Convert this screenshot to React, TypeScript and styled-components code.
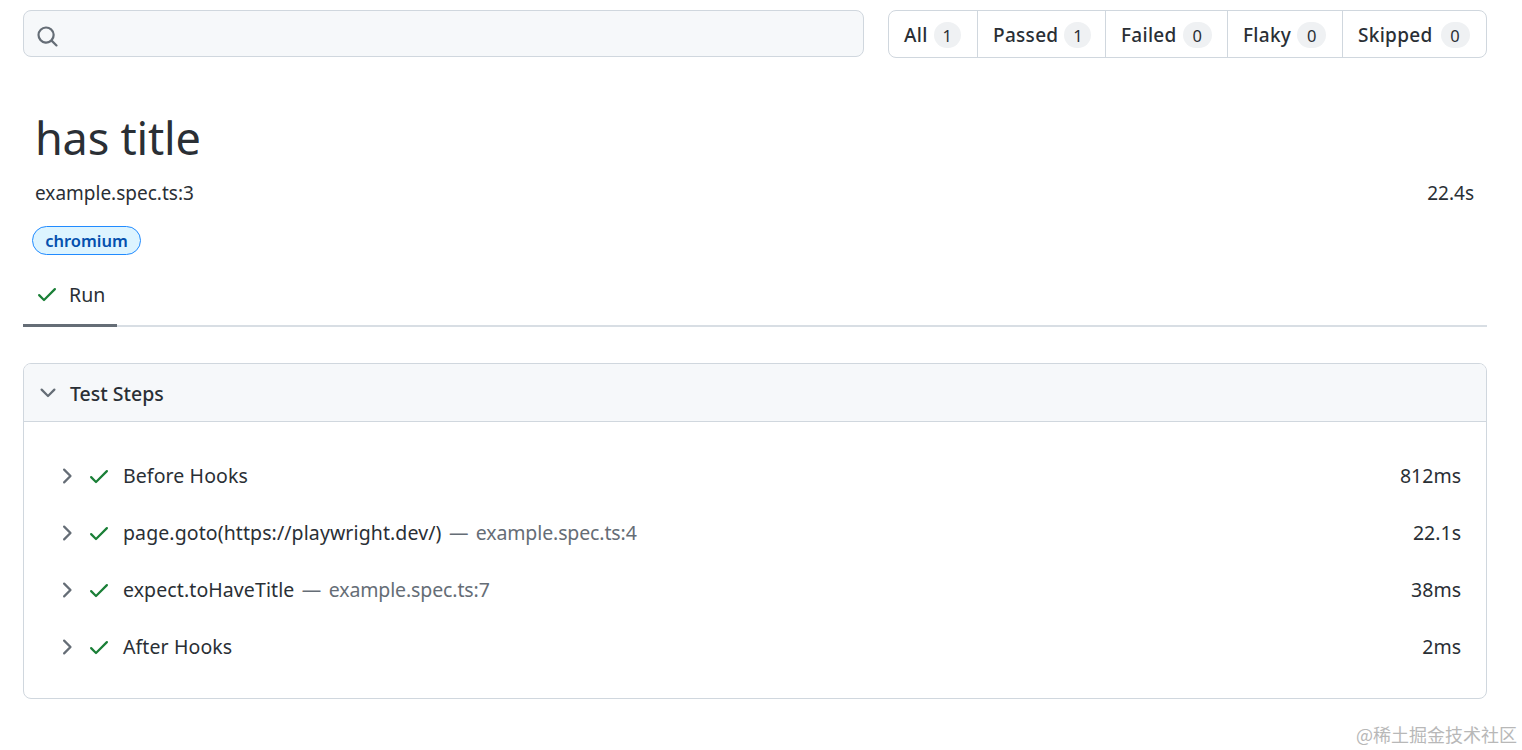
import styled, {createGlobalStyle} from 'styled-components'

const FONT = '"Noto Sans", "Open Sans", sans-serif'

const searchPath = 'M10.68 11.74a6 6 0 0 1-7.922-8.982 6 6 0 0 1 8.982 7.922l3.04 3.04a.749.749 0 0 1-.326 1.275.749.749 0 0 1-.734-.215ZM11.5 7a4.499 4.499 0 1 0-8.997 0A4.499 4.499 0 0 0 11.5 7Z'
const checkPath = 'M13.78 4.22a.75.75 0 0 1 0 1.06l-7.25 7.25a.75.75 0 0 1-1.06 0L2.22 9.28a.751.751 0 0 1 .018-1.042.751.751 0 0 1 1.042-.018L6 10.94l6.72-6.72a.75.75 0 0 1 1.06 0Z'
const chevronDownPath = 'M12.78 5.22a.749.749 0 0 1 0 1.06l-4.25 4.25a.749.749 0 0 1-1.06 0L3.22 6.28a.749.749 0 1 1 1.06-1.06L8 8.939l3.72-3.719a.749.749 0 0 1 1.06 0Z'
const chevronRightPath = 'M6.22 3.22a.75.75 0 0 1 1.06 0l4.25 4.25a.75.75 0 0 1 0 1.06l-4.25 4.25a.751.751 0 0 1-1.042-.018.751.751 0 0 1-.018-1.042L9.94 8 6.22 4.28a.75.75 0 0 1 0-1.06Z'

const Icon = ({d, color}: {d: string; color: string}) => (
    <IconSvg viewBox="0 0 16 16" fill={color}>
        <path d={d}/>
    </IconSvg>
)

const filters = [
    {label: 'All', count: 1, width: 88},
    {label: 'Passed', count: 1, width: 128},
    {label: 'Failed', count: 0, width: 122},
    {label: 'Flaky', count: 0, width: 115},
    {label: 'Skipped', count: 0, width: 144},
]

const steps = [
    {title: 'Before Hooks', source: '', time: '812ms'},
    {title: 'page.goto(https://playwright.dev/)', source: 'example.spec.ts:4', time: '22.1s'},
    {title: 'expect.toHaveTitle', source: 'example.spec.ts:7', time: '38ms'},
    {title: 'After Hooks', source: '', time: '2ms'},
]

const App = () => {
    return (
        <Page>
            <GlobalStyle/>
            <TopBar>
                <SearchBox>
                    <Icon d={searchPath} color="#656d76"/>
                </SearchBox>
                <FilterNav>
                    {filters.map((f) => (
                        <FilterItem key={f.label} $width={f.width}>
                            {f.label}
                            <Counter $wide={f.count === 0}>{f.count}</Counter>
                        </FilterItem>
                    ))}
                </FilterNav>
            </TopBar>

            <Title>has title</Title>
            <MetaRow>
                <span>example.spec.ts:3</span>
                <span>22.4s</span>
            </MetaRow>
            <Label>chromium</Label>

            <Tabs>
                <Tab>
                    <Icon d={checkPath} color="#1a7f37"/>
                    Run
                </Tab>
            </Tabs>

            <Chip>
                <ChipHeader>
                    <Icon d={chevronDownPath} color="#656d76"/>
                    Test Steps
                </ChipHeader>
                <ChipBody>
                    {steps.map((s) => (
                        <StepRow key={s.title}>
                            <Icon d={chevronRightPath} color="#656d76"/>
                            <Icon d={checkPath} color="#1a7f37"/>
                            <StepTitle>
                                {s.title}
                                {s.source && <StepSource> — {s.source}</StepSource>}
                            </StepTitle>
                            <StepTime>{s.time}</StepTime>
                        </StepRow>
                    ))}
                </ChipBody>
            </Chip>

            <Watermark>@稀土掘金技术社区</Watermark>
        </Page>
    )
}
export default App

// ==========================================

const GlobalStyle = createGlobalStyle`
  html, body {
    margin: 0;
    background: #fff;
    overflow: hidden;
  }
`

const Page = styled.div`
  position: relative;
  box-sizing: border-box;
  width: 1522px;
  height: 750px;
  padding: 10px 35px 0 23px;
  font-family: ${FONT};
  font-size: 19px;
  color: #2a2f35;
`

const IconSvg = styled.svg`
  width: 24px;
  height: 24px;
  flex: none;
`

const TopBar = styled.div`
  display: flex;
  justify-content: space-between;
  align-items: flex-start;
`

const SearchBox = styled.div`
  box-sizing: border-box;
  width: 841px;
  height: 47px;
  display: flex;
  align-items: center;
  padding: 5px 0 0 12px;
  background: #f6f8fa;
  border: 1px solid #d0d7de;
  border-radius: 8px;

  svg {
    width: 23px;
    height: 23px;
  }
`

const FilterNav = styled.div`
  display: flex;
  height: 48px;
  box-sizing: border-box;
  border: 1px solid #d0d7de;
  border-radius: 8px;
`

const FilterItem = styled.div<{$width: number}>`
  box-sizing: border-box;
  width: ${(p) => p.$width}px;
  display: flex;
  align-items: center;
  padding: 2px 0 0 15px;
  font-size: 19px;
  font-weight: 500;
  letter-spacing: 0.3px;

  & + & {
    border-left: 1px solid #d0d7de;
  }

  &:last-child > span {
    margin-left: 8px;
  }
`

const Counter = styled.span<{$wide?: boolean}>`
  width: ${(p) => (p.$wide ? 29 : 27)}px;
  height: 26px;
  margin-left: 6px;
  border-radius: 13px;
  background: #eff1f3;
  display: flex;
  align-items: center;
  justify-content: center;
  font-size: 16.5px;
  font-weight: 400;
  letter-spacing: 0;
`

const Title = styled.h1`
  margin: 48px 0 0 12px;
  font-size: 45px;
  line-height: 64px;
  font-weight: 400;
  letter-spacing: -0.2px;
`

const MetaRow = styled.div`
  display: flex;
  justify-content: space-between;
  margin: 8px 13px 0 12px;
  line-height: 30px;
  font-size: 19px;
`

const Label = styled.div`
  box-sizing: border-box;
  width: 109px;
  height: 29px;
  margin: 18px 0 0 9px;
  display: flex;
  align-items: center;
  justify-content: center;
  border: 1px solid #218bff;
  border-radius: 15px;
  background: #ddf4ff;
  color: #0550ae;
  font-size: 16.5px;
  font-weight: 600;
`

const Tabs = styled.div`
  margin-top: 20px;
  width: 1464px;
  border-bottom: 2px solid #d8dee4;
`

const Tab = styled.div`
  box-sizing: border-box;
  width: 94px;
  height: 52px;
  margin-bottom: -2px;
  display: flex;
  align-items: center;
  gap: 10px;
  padding: 0 0 11px 12px;
  border-bottom: 3px solid #656d76;
  font-size: 19.5px;
`

const Chip = styled.div`
  width: 1464px;
  box-sizing: border-box;
  margin-top: 36px;
  height: 336px;
  border: 1px solid #d0d7de;
  border-radius: 8px;
  overflow: hidden;
`

const ChipHeader = styled.div`
  box-sizing: border-box;
  height: 58px;
  display: flex;
  align-items: center;
  gap: 10px;
  padding: 1px 0 0 12px;
  background: #f6f8fa;
  border-bottom: 1px solid #d0d7de;
  font-size: 19.5px;
  font-weight: 500;
`

const ChipBody = styled.div`
  padding: 25px 25px 0 30px;
`

const StepRow = styled.div`
  height: 57px;
  display: flex;
  align-items: center;
  gap: 9px;
  font-size: 19.5px;

  svg + svg {
    margin-right: 3px;
  }
`

const StepTitle = styled.span`
  flex: 1;
  letter-spacing: 0.1px;
`

const StepSource = styled.span`
  color: #656d76;
  letter-spacing: -0.12px;
  word-spacing: 2.5px;
`

const StepTime = styled.span``

const Watermark = styled.div`
  position: absolute;
  right: 5px;
  bottom: 4px;
  font-family: "Noto Sans CJK SC", sans-serif;
  font-size: 18px;
  line-height: 24px;
  color: #b8b8b8;
`
